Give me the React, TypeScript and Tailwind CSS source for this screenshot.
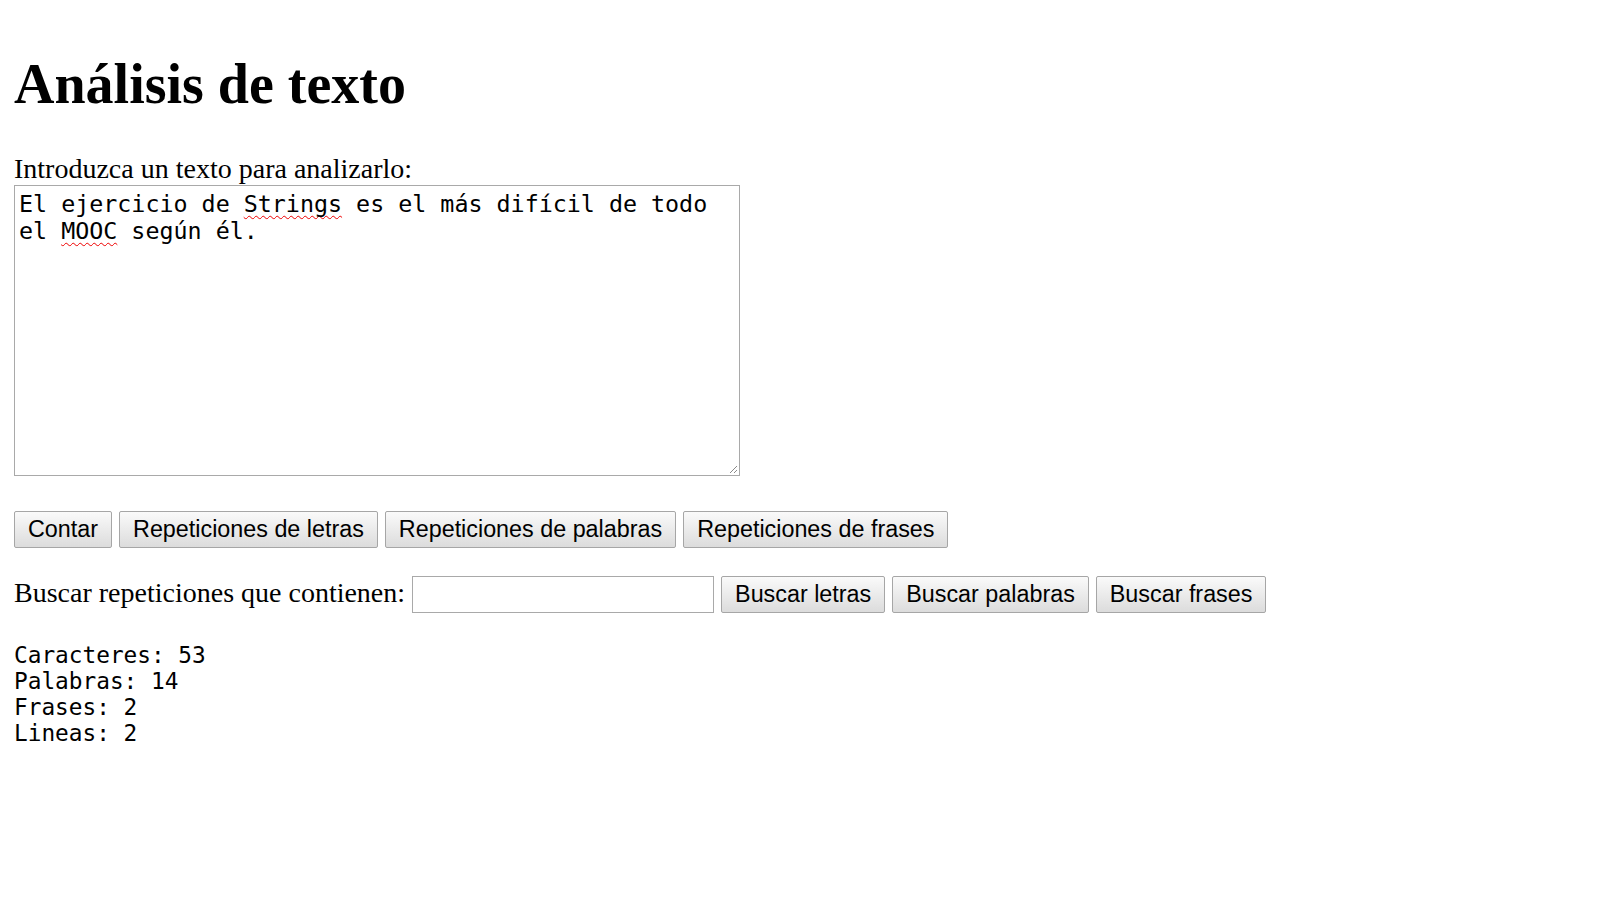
import React from 'react';

const serif = "font-['Liberation_Serif','Times_New_Roman',serif]";
const mono = "font-['DejaVu_Sans_Mono','Liberation_Mono',monospace]";
const btn =
  "h-[37px] px-[13px] border border-[#a6a6a6] rounded-[2px] bg-gradient-to-b from-[#fafafa] to-[#dcdcdc] text-[23.33px] leading-none text-black font-['Liberation_Sans',Arial,sans-serif] flex items-center whitespace-nowrap";

const Squiggle = ({ children }: { children: React.ReactNode }) => (
  <span className="underline decoration-wavy decoration-[#ee0000] decoration-1 underline-offset-[3px] [text-decoration-skip-ink:none]">{children}</span>
);

export default function App() {
  return (
    <div className={`min-h-screen bg-white text-black px-[14px] ${serif}`}>
      <h1 className="pt-[52px] text-[56px] leading-[64px] font-bold">Análisis de texto</h1>

      <div className="mt-[37px] text-[28px] leading-[32px]">Introduzca un texto para analizarlo:</div>

      {/* textarea look-alike, keeps the spellcheck squiggles */}
      <div
        role="textbox"
        className={`relative w-[726px] h-[291px] border border-[#a9a9a9] px-[4px] py-[4.5px] text-[23.33px] leading-[27px] ${mono}`}
      >
        El ejercicio de <Squiggle>Strings</Squiggle> es el más difícil de todo
        <br />
        el <Squiggle>MOOC</Squiggle> según él.
        <svg className="absolute right-[1px] bottom-[1px]" width="10" height="10" viewBox="0 0 10 10">
          <path d="M9 2 L2 9 M9 6 L6 9" stroke="#8a8a8a" strokeWidth="1" fill="none" />
        </svg>
      </div>

      <div className="mt-[35px] flex gap-[7px]">
        <button className={btn}>Contar</button>
        <button className={btn}>Repeticiones de letras</button>
        <button className={btn}>Repeticiones de palabras</button>
        <button className={btn}>Repeticiones de frases</button>
      </div>

      <div className="mt-[28px] flex items-center">
        <span className="text-[28px] leading-[32px] mr-[7px] -mt-[4px]">Buscar repeticiones que contienen:</span>
        <input type="text" className="w-[302px] h-[37px] border border-[#a9a9a9] bg-white mr-[7px] outline-none" />
        <div className="flex gap-[7px]">
          <button className={btn}>Buscar letras</button>
          <button className={btn}>Buscar palabras</button>
          <button className={btn}>Buscar frases</button>
        </div>
      </div>

      <div className={`mt-[29px] text-[22.75px] leading-[26px] ${mono}`}>
        <div>Caracteres: 53</div>
        <div>Palabras: 14</div>
        <div>Frases: 2</div>
        <div>Lineas: 2</div>
      </div>
    </div>
  );
}
